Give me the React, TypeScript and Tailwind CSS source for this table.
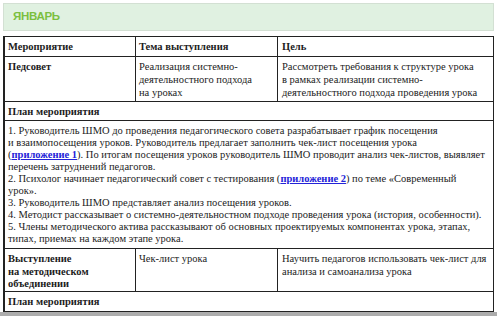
import type { ReactNode } from 'react'

const cell = 'border-b border-r border-[#222] px-[3px]'
const row = 'grid grid-cols-[131px_142px_216px]'

function Link({ children }: { children: ReactNode }): ReactNode {
  return <a className="font-bold text-[#2323d8] underline">{children}</a>
}

export default function App(): ReactNode {
  return (
    <div className="h-[316px] w-[500px] overflow-hidden bg-white">
      <div className="px-[3px] pt-[3px]">
        <div className="flex h-[28px] w-[491px] items-center border border-[#d3e0d3] bg-[#e0f1e1] pl-[9px]">
          <span className="font-['Liberation_Sans',sans-serif] text-[11.5px] font-bold tracking-[-0.3px] text-[#7bbf3f]">
            ЯНВАРЬ
          </span>
        </div>
      </div>

      <div className="ml-[3px] mt-[5px] w-[491px] border-l-2 border-t border-[#222] font-['Liberation_Serif',serif] text-[10.5px] leading-[13px] text-[#1c1c1c]">
        <div className={`${row} h-[20px] font-bold`}>
          <div className={`${cell} pt-[3px]`}>Мероприятие</div>
          <div className={`${cell} pt-[3px]`}>Тема выступления</div>
          <div className={`${cell} pt-[3px] pl-[4px]`}>Цель</div>
        </div>

        <div className={`${row} h-[45px]`}>
          <div className={`${cell} pt-[3px] font-bold`}>Педсовет</div>
          <div className={`${cell} pt-[3px]`}>
            Реализация системно-
            <br />
            деятельностного подхода
            <br />
            на уроках
          </div>
          <div className={`${cell} pt-[3px] pl-[4px]`}>
            Рассмотреть требования к структуре урока
            <br />
            в рамках реализации системно-
            <br />
            деятельностного подхода проведения урока
          </div>
        </div>

        <div className={`${cell} h-[19px] pt-[3px] font-bold`}>План мероприятия</div>

        <div className={`${cell} h-[128px] pt-[4px] leading-[12px] whitespace-nowrap`}>
          1. Руководитель ШМО до проведения педагогического совета разрабатывает график посещения
          <br />
          и взаимопосещения уроков. Руководитель предлагает заполнить чек-лист посещения урока
          <br />
          (<Link>приложение 1</Link>). По итогам посещения уроков руководитель ШМО проводит анализ чек-листов,
          выявляет
          <br />
          перечень затруднений педагогов.
          <br />
          2. Психолог начинает педагогический совет с тестирования (<Link>приложение 2</Link>) по теме
          «Современный
          <br />
          урок».
          <br />
          3. Руководитель ШМО представляет анализ посещения уроков.
          <br />
          4. Методист рассказывает о системно-деятельностном подходе проведения урока (история, особенности).
          <br />
          5. Члены методического актива рассказывают об основных проектируемых компонентах урока, этапах,
          <br />
          типах, приемах на каждом этапе урока.
        </div>

        <div className={`${row} h-[43px] leading-[12.5px]`}>
          <div className={`${cell} pt-[4px] font-bold`}>
            Выступление
            <br />
            на методическом
            <br />
            объединении
          </div>
          <div className={`${cell} pt-[4px]`}>Чек-лист урока</div>
          <div className={`${cell} pt-[4px] pl-[4px]`}>
            Научить педагогов использовать чек-лист для
            <br />
            анализа и самоанализа урока
          </div>
        </div>

        <div className={`${cell} h-[20px] pt-[3px] font-bold`}>План мероприятия</div>
      </div>

      <div className="h-[4px] w-[497px] bg-[#adadad]" />
    </div>
  )
}
